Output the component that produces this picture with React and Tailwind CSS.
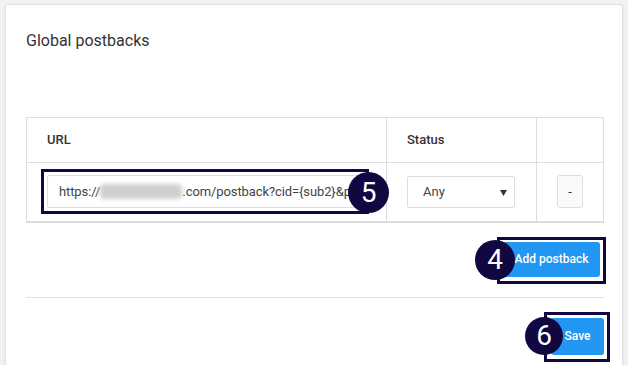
export default function App() {
  const ink = "bg-[#110841]";

  return (
    <div className="h-[365px] w-[628px] overflow-hidden bg-[#f2f2f2] px-[5px] pt-[4px] font-['Roboto',sans-serif]">
      <div className="min-h-[380px] rounded-[4px] border border-[#e2e2e2] bg-white pb-10 pl-5 pr-[18px] pt-6 shadow-[0_1px_3px_rgba(0,0,0,0.08)]">
        <h2 className="text-[16px] leading-6 text-[#333]">Global postbacks</h2>

        {/* Postbacks table */}
        <table className="mt-16 w-full table-fixed border-collapse text-[13px] text-[#333]">
          <colgroup>
            <col className="w-[360px]" />
            <col className="w-[150px]" />
            <col />
          </colgroup>
          <thead>
            <tr className="h-[45px]">
              <th className="border border-[#dddddd] px-5 text-left font-medium">URL</th>
              <th className="border border-[#dddddd] px-5 text-left font-medium">Status</th>
              <th className="border border-[#dddddd]" />
            </tr>
          </thead>
          <tbody>
            <tr className="h-[59px]">
              <td className="border border-b-2 border-[#dddddd] px-5">
                <div className="relative h-[33px]">
                  <div className="flex h-full items-center overflow-hidden whitespace-nowrap rounded-[2px] border border-[#dddddd] pl-[11px] text-[13px] tracking-[-0.1px] text-[#444]">
                    https://
                    <span className="inline-block h-[15px] w-[82px] shrink-0 rounded-sm bg-[#cfcfcf] blur-[2px]" />
                    .com/postback?cid={"{sub2}"}&amp;pay
                  </div>
                  <div className="pointer-events-none absolute -bottom-[6px] -left-[6px] -right-[3px] -top-[6px] border-[3px] border-[#110841]" />
                  <div className={`absolute left-[301px] top-[-3px] flex h-[41px] w-[41px] items-center justify-center rounded-full ${ink} text-[28px] leading-none text-white`}>
                    5
                  </div>
                </div>
              </td>
              <td className="border border-b-2 border-[#dddddd] px-5">
                <div className="relative flex h-[32px] w-[108px] items-center rounded-[2px] border border-[#dddddd] pl-[15px] text-[13px] text-[#444]">
                  Any
                  <svg className="absolute right-[7px] top-[13px]" width="7" height="6" viewBox="0 0 7 6">
                    <path d="M0 0h7L3.5 6z" fill="#333" />
                  </svg>
                </div>
              </td>
              <td className="border border-b-2 border-[#dddddd] text-center">
                <button className="inline-flex h-[33px] w-[26px] items-center justify-center rounded-[3px] border border-[#dddddd] bg-[#fafafa] text-[13px] text-[#333]">
                  -
                </button>
              </td>
            </tr>
          </tbody>
        </table>

        {/* Add postback */}
        <div className="mt-[19px] flex justify-end pr-1">
          <div className="relative">
            <button className="h-[35px] w-[97px] rounded-[3px] bg-[#2196f3] text-[12px] font-medium text-white">
              Add postback
            </button>
            <div className="pointer-events-none absolute -bottom-[7px] -left-[6px] -right-[6px] -top-[5px] border-[3px] border-[#110841]" />
            <div className={`absolute left-[-28px] top-[-2px] flex h-[40px] w-[40px] items-center justify-center rounded-full ${ink} text-[28px] leading-none text-white`}>
              4
            </div>
          </div>
        </div>

        <div className="mt-5 h-px bg-[#e0e0e0]" />

        {/* Save */}
        <div className="mt-5 flex justify-end">
          <div className="relative">
            <button className="h-[37px] w-[53px] rounded-[3px] bg-[#2196f3] text-[12px] font-medium text-white">
              Save
            </button>
            <div className="pointer-events-none absolute -bottom-[7px] -left-[7px] -right-[6px] -top-[6px] border-[3px] border-[#110841]" />
            <div className={`absolute left-[-26px] top-[-1px] flex h-[38px] w-[38px] items-center justify-center rounded-full ${ink} text-[28px] leading-none text-white`}>
              6
            </div>
          </div>
        </div>
      </div>
    </div>
  );
}
